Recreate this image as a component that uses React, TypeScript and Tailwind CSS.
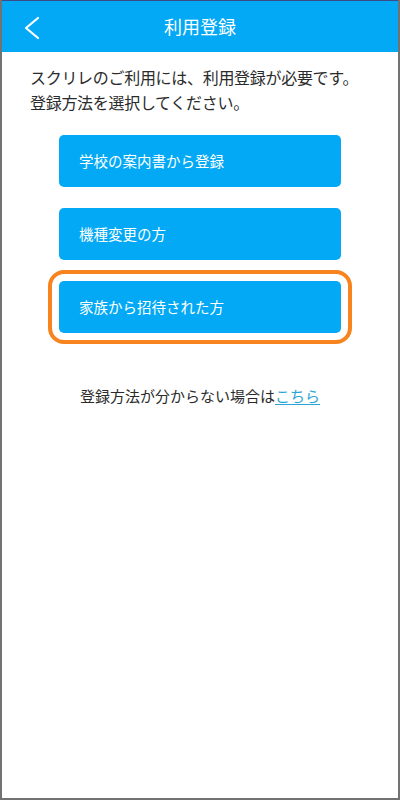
const font = {
  fontFamily: '"Noto Sans CJK JP", "Noto Sans", sans-serif',
};

const options = ["学校の案内書から登録", "機種変更の方", "家族から招待された方"];

export default function App() {
  return (
    <div
      className="w-[400px] h-[800px] bg-white text-[#2b2b2b] border-x-2 border-b-2 border-[#727272] flex flex-col"
      style={font}
    >
      {/* header */}
      <header className="h-[52px] bg-[#03a9f4] border-t border-[#3c4a86] relative flex items-center justify-center">
        <button className="absolute left-[20px] top-[13px] text-white">
          <svg width="20" height="28" viewBox="0 0 20 28" fill="none">
            <polyline
              points="16,4 4,14 16,24"
              stroke="currentColor"
              strokeWidth="2.2"
              strokeLinecap="round"
              strokeLinejoin="round"
            />
          </svg>
        </button>
        <h1 className="text-white text-[18px]">利用登録</h1>
      </header>

      <div className="pt-[13px] px-[28px]">
        <p className="text-[16px] leading-[25px] tracking-[-0.3px]">
          スクリレのご利用には、利用登録が必要です。
          <br />
          登録方法を選択してください。
        </p>
      </div>

      <div className="mt-[20px] px-[57px] flex flex-col gap-[21px]">
        {options.map((label, i) => (
          <button
            key={label}
            className={
              "h-[52px] rounded-[5px] bg-[#03a9f4] text-white text-left pl-[20px] text-[14.5px] " +
              (i === 2 ? "outline-[4px] outline-solid outline-[#f7841e] outline-offset-[7px]" : "")
            }
          >
            {label}
          </button>
        ))}
      </div>

      <p className="mt-[52px] text-center text-[15px]">
        登録方法が分からない場合は
        <a className="text-[#2aa5d6] underline underline-offset-2">こちら</a>
      </p>
    </div>
  );
}
